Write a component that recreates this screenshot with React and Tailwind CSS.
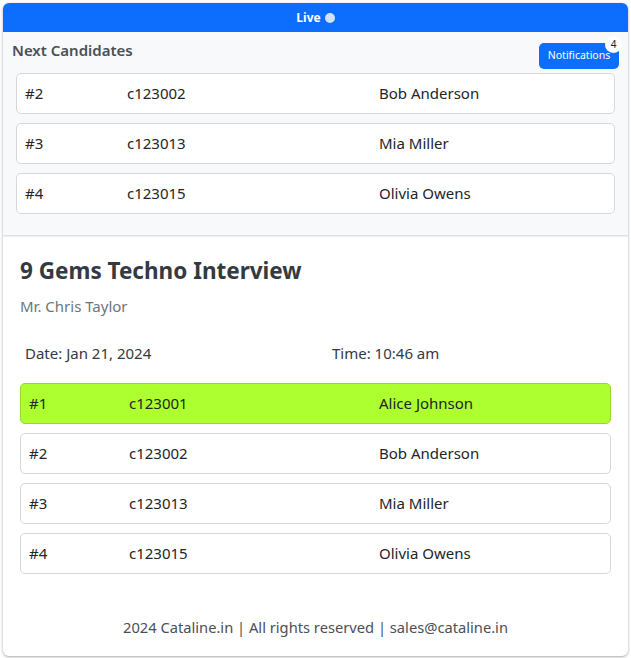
import React from "react";

const nextCandidates = [
  { pos: "#2", id: "c123002", name: "Bob Anderson" },
  { pos: "#3", id: "c123013", name: "Mia Miller" },
  { pos: "#4", id: "c123015", name: "Olivia Owens" },
];

const allCandidates = [
  { pos: "#1", id: "c123001", name: "Alice Johnson", current: true },
  ...nextCandidates,
];

const Row = ({ c, first, second }) => (
  <div
    className={`flex items-center h-[41px] rounded-[5px] border text-[15px] text-[#212529] ${
      c.current ? "bg-[#adff2f] border-[#97d62a]" : "bg-white border-[#d5d7d9]"
    } pl-[8px]`}
  >
    <span className={first}>{c.pos}</span>
    <span className={second}>{c.id}</span>
    <span>{c.name}</span>
  </div>
);

export default function App() {
  return (
    <div
      className="p-[3px] bg-white min-h-screen"
      style={{ fontFamily: '"Noto Sans", "Open Sans", sans-serif' }}
    >
      <div className="rounded-[6px] overflow-hidden shadow-[0_1px_3px_rgba(0,0,0,0.35)] bg-white">
        <div className="bg-[#0d6efd] h-[29px] flex items-center justify-center gap-[4px] text-white text-[12px] font-bold">
          <span>Live</span>
          <span className="w-[10px] h-[10px] rounded-full bg-[#cfe2ff] inline-block" />
        </div>

        <div className="bg-[#f8f9fa] px-[9px] pt-[7px] pb-[21px] shadow-[0_1px_2px_rgba(0,0,0,0.18)] relative">
          <div className="flex justify-between items-start">
            <h2 className="text-[15px] font-semibold text-[#495057] leading-[22px]">
              Next Candidates
            </h2>
            <div className="relative mt-[2px]">
              <button className="bg-[#0d6efd] text-white text-[10.5px] rounded-[5px] w-[80px] h-[26px]">
                Notifications
              </button>
              <span className="absolute -top-[5px] -right-[3px] w-[17px] h-[17px] rounded-full bg-white text-[#212529] text-[10px] flex items-center justify-center">
                4
              </span>
            </div>
          </div>
          <div className="flex flex-col gap-[9px] mt-[4px] px-[4px]">
            {nextCandidates.map((c) => (
              <Row key={c.pos} c={c} first="w-[102px]" second="w-[252px]" />
            ))}
          </div>
        </div>

        <div className="px-[17px] pt-[21px] pb-[18px]">
          <h1 className="text-[22.5px] font-bold text-[#343a40] leading-[30px]">
            9 Gems Techno Interview
          </h1>
          <p className="text-[15px] text-[#6c757d] mt-[9px]">Mr. Chris Taylor</p>
          <div className="flex text-[15px] text-[#343a40] mt-[25px] px-[5px]">
            <span className="w-[307px]">Date: Jan 21, 2024</span>
            <span>Time: 10:46 am</span>
          </div>
          <div className="flex flex-col gap-[9px] mt-[18px]">
            {allCandidates.map((c) => (
              <Row key={c.pos} c={c} first="w-[100px]" second="w-[250px]" />
            ))}
          </div>
          <p className="text-center text-[14.7px] text-[#495057] mt-[42px]">
            2024 Cataline.in | All rights reserved | sales@cataline.in
          </p>
        </div>
      </div>
    </div>
  );
}
